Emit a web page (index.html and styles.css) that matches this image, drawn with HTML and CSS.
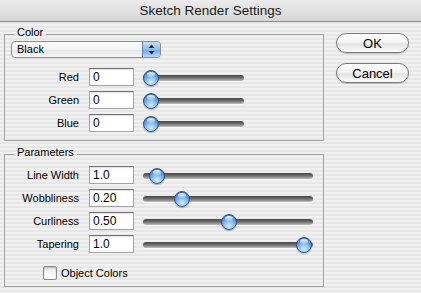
FILE: index.html
```html
<!DOCTYPE html>
<html>
<head>
<title>Sketch Render Settings</title>
<link rel="stylesheet" href="styles.css">
</head>

<body>
<div class="window">
  <div class="titlebar">Sketch Render Settings</div>

  <div class="content">
    <div class="groups">
      <fieldset class="group group-color">
        <legend>Color</legend>
        <div class="popup">
          <span class="popup-value">Black</span>
          <span class="popup-arrows">
            <svg width="7" height="11" viewBox="0 0 7 11">
              <path d="M3.5 0.5 L6.5 4 L0.5 4 Z" fill="#1d2c4a"/>
              <path d="M3.5 10.5 L6.5 7 L0.5 7 Z" fill="#1d2c4a"/>
            </svg>
          </span>
        </div>
        <div class="rows">
          <label class="row-label">Red</label>
          <input class="field" type="text" value="0">
          <div class="slider"><span class="track"></span><span class="thumb" style="--pos: 0"></span></div>

          <label class="row-label">Green</label>
          <input class="field" type="text" value="0">
          <div class="slider"><span class="track"></span><span class="thumb" style="--pos: 0"></span></div>

          <label class="row-label">Blue</label>
          <input class="field" type="text" value="0">
          <div class="slider"><span class="track"></span><span class="thumb" style="--pos: 0"></span></div>
        </div>
      </fieldset>

      <fieldset class="group group-params">
        <legend>Parameters</legend>
        <div class="rows">
          <label class="row-label">Line Width</label>
          <input class="field" type="text" value="1.0">
          <div class="slider"><span class="track"></span><span class="thumb" style="--pos: 0.04"></span></div>

          <label class="row-label">Wobbliness</label>
          <input class="field" type="text" value="0.20">
          <div class="slider"><span class="track"></span><span class="thumb" style="--pos: 0.2"></span></div>

          <label class="row-label">Curliness</label>
          <input class="field" type="text" value="0.50">
          <div class="slider"><span class="track"></span><span class="thumb" style="--pos: 0.506"></span></div>

          <label class="row-label">Tapering</label>
          <input class="field" type="text" value="1.0">
          <div class="slider"><span class="track"></span><span class="thumb" style="--pos: 0.995"></span></div>
        </div>
        <label class="check"><span class="checkbox"></span>Object Colors</label>
      </fieldset>
    </div>

    <div class="buttons">
      <button class="button">OK</button>
      <button class="button">Cancel</button>
    </div>
  </div>
</div>
</body>
</html>
```

FILE: styles.css
```css
html, body {
  margin: 0;
  padding: 0;
}
body {
  width: 421px;
  height: 293px;
  overflow: hidden;
  font-family: "Liberation Sans", Arial, sans-serif;
  font-size: 11px;
  color: #000;
  background: repeating-linear-gradient(#f1f1f1 0px, #f1f1f1 2px, #e7e7e7 2px, #e7e7e7 4px);
}

/* title bar */
.titlebar {
  height: 21px;
  line-height: 21px;
  text-align: center;
  font-size: 13.5px;
  color: #1a1a1a;
  background: linear-gradient(#ececec, #d6d6d6);
  border-bottom: 1px solid #8c8c8c;
}

.content {
  display: flex;
  align-items: flex-start;
}
.groups {
  margin-left: 4px;
}

/* group boxes */
.group {
  width: 320px;
  box-sizing: border-box;
  margin: 0;
  padding: 0;
  min-width: 0;
  border: 1px solid #a2a2a2;
}
.group legend {
  margin-left: 9px;
  padding: 0 3px 4px 3px;
  line-height: 12px;
  font-size: 11px;
}
.group-color {
  margin-top: 4px;
  padding-bottom: 8px;
}
.group-params {
  margin-top: 5px;
  padding-bottom: 6px;
}

/* popup button */
.popup {
  display: flex;
  width: 150px;
  height: 17px;
  box-sizing: border-box;
  margin: -1px 0 0 6px;
  border: 1px solid #8a8a8a;
  border-radius: 4px;
  overflow: hidden;
  background: linear-gradient(#ffffff, #f3f3f3 50%, #e4e4e4 51%, #f7f7f7);
}
.popup-value {
  flex: 1;
  padding-left: 5px;
  line-height: 15px;
}
.popup-arrows {
  width: 17px;
  display: flex;
  align-items: center;
  justify-content: center;
  border-left: 1px solid #5d7fb0;
  background: linear-gradient(#c9e0f8, #8fbcec 50%, #6fa6e4 51%, #b4d8fb);
}

/* label / field / slider rows */
.rows {
  display: grid;
  grid-template-columns: 75px 45px 101px;
  column-gap: 9px;
  row-gap: 5px;
  align-items: center;
}
.group-color .rows {
  margin-top: 10px;
}
.group-params .rows {
  margin-top: 4px;
  grid-template-columns: 75px 45px 170px;
}
.row-label {
  text-align: right;
  padding-right: 1px;
}
.field {
  width: 45px;
  height: 18px;
  box-sizing: border-box;
  margin: 0;
  padding: 0 3px;
  font-family: "Liberation Sans", Arial, sans-serif;
  font-size: 12px;
  color: #000;
  background: #fff;
  border: 1px solid #a4a4a4;
  border-top-color: #717171;
  box-shadow: inset 0 1px 1px rgba(0, 0, 0, 0.12);
  outline: none;
}

.slider {
  position: relative;
  height: 18px;
  display: flex;
  align-items: center;
}
.track {
  flex: 1;
  height: 6px;
  margin-top: 2px;
  border-radius: 3px;
  background: linear-gradient(#464646, #6c6c6c 45%, #9d9d9d 80%, #c4c4c4);
  box-shadow: 0 1px 0 rgba(255, 255, 255, 0.7);
}
.thumb {
  position: absolute;
  top: 2px;
  left: calc((100% - 16px) * var(--pos));
  width: 16px;
  height: 16px;
  box-sizing: border-box;
  border-radius: 50%;
  border: 1px solid #34568a;
  background: radial-gradient(circle at 50% 80%, #d6f0ff 0%, #91c3f2 35%, #4b86d2 72%, #2a5aa4 100%);
  box-shadow: 0 1px 1px rgba(0, 0, 0, 0.3);
}
.thumb::after {
  content: "";
  position: absolute;
  left: 3px;
  top: 1px;
  width: 8px;
  height: 5px;
  border-radius: 50%;
  background: linear-gradient(rgba(255, 255, 255, 0.95), rgba(255, 255, 255, 0.2));
}

/* checkbox */
.check {
  display: flex;
  align-items: center;
  margin: 13px 0 0 38px;
  height: 14px;
}
.checkbox {
  width: 14px;
  height: 14px;
  box-sizing: border-box;
  margin-right: 4px;
  border: 1px solid #888;
  border-radius: 2px;
  background: linear-gradient(#e4e4e4, #fbfbfb 60%, #ffffff);
  box-shadow: inset 0 1px 2px rgba(0, 0, 0, 0.2);
}

/* push buttons */
.buttons {
  display: flex;
  flex-direction: column;
  gap: 10px;
  margin: 11px 0 0 12px;
}
.button {
  width: 73px;
  height: 20px;
  box-sizing: border-box;
  padding: 0;
  font-family: "Liberation Sans", Arial, sans-serif;
  font-size: 13px;
  color: #000;
  border: 1px solid #7a7a7a;
  border-radius: 10px;
  background: linear-gradient(#ffffff, #f4f4f4 45%, #e3e3e3 55%, #fbfbfb);
  box-shadow: 0 1px 1px rgba(0, 0, 0, 0.2);
}
```
